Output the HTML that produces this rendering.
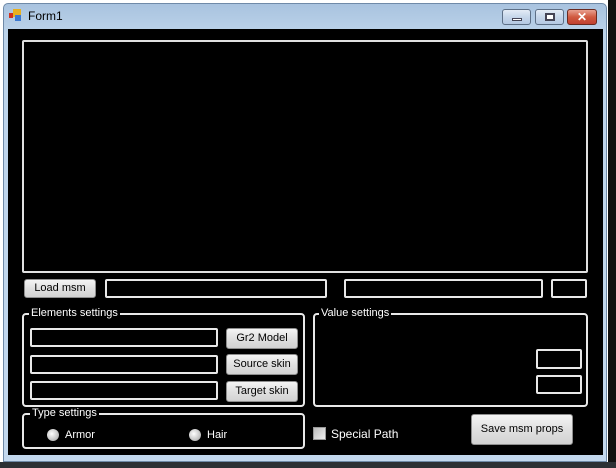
<!DOCTYPE html>
<html><head><style>
*{margin:0;padding:0;box-sizing:border-box}
body{width:616px;height:468px;background:#fff;position:relative;overflow:hidden;font-family:"Liberation Sans",sans-serif;font-size:11px}
.a{position:absolute}
.win{left:3px;top:3px;width:604px;height:459px;background:linear-gradient(#a9c3df,#bcd3ea 30px,#c3d8ee);border:1px solid #6f8aa8;border-radius:5px 5px 0 0}
.client{left:8px;top:29px;width:595px;height:426px;background:#000}
.tb{border:2px solid #e8e8e8;border-radius:2px;background:#000}
.btn{background:linear-gradient(#f4f4f4,#e0e0e0 50%,#d2d2d2);border:1px solid #8e8e8e;border-radius:3px;color:#000;text-align:center;font-size:11px}
.grp{border:2px solid #e8e8e8;border-radius:4px}
.lbl{color:#fff;background:#000;padding:0 2px;font-size:11px}
.radio{width:12px;height:12px;border-radius:50%;background:radial-gradient(circle at 40% 40%,#fff,#bbb 70%,#888);}
.wb{border:1px solid #5d6f86;border-radius:3px;background:linear-gradient(#e4ecf6,#c6d6ea 50%,#b4c8e2)}
</style></head><body>
<div class="a" style="left:0;top:462px;width:616px;height:6px;background:#2c3034"></div>
<div class="a" style="left:608px;top:0;width:8px;height:462px;background:#111"></div>
<div class="a win"></div>
<div class="a" style="left:13px;top:9px;width:8px;height:8px;background:#e8b020"></div>
<div class="a" style="left:15px;top:15px;width:6px;height:6px;background:#3b78d0"></div>
<div class="a" style="left:9px;top:13px;width:4px;height:5px;background:#d03020"></div>
<div class="a" style="left:28px;top:9px;font-size:12px;color:#000">Form1</div>
<div class="a wb" style="left:502px;top:9px;width:29px;height:16px"><div class="a" style="left:9px;top:8px;width:10px;height:3px;background:#fff;border:1px solid #445"></div></div>
<div class="a wb" style="left:535px;top:9px;width:29px;height:16px"><div class="a" style="left:9px;top:3px;width:10px;height:8px;border:2px solid #445;background:#fff"></div></div>
<div class="a" style="left:567px;top:9px;width:30px;height:16px;border:1px solid #6a2a20;border-radius:3px;background:linear-gradient(#e8a090,#d05a40 50%,#c04030);color:#fff;font-weight:bold;text-align:center;font-size:12px;line-height:14px">✕</div>
<div class="a client"></div>
<div class="a tb" style="left:22px;top:40px;width:566px;height:233px;border-color:#e0e0e0"></div>
<div class="a btn" style="left:24px;top:279px;width:72px;height:19px;line-height:17px">Load msm</div>
<div class="a tb" style="left:105px;top:279px;width:222px;height:19px"></div>
<div class="a tb" style="left:344px;top:279px;width:199px;height:19px"></div>
<div class="a tb" style="left:551px;top:279px;width:36px;height:19px"></div>
<div class="a grp" style="left:22px;top:313px;width:283px;height:94px"></div>
<div class="a lbl" style="left:29px;top:307px">Elements settings</div>
<div class="a tb" style="left:30px;top:328px;width:188px;height:19px"></div>
<div class="a tb" style="left:30px;top:355px;width:188px;height:19px"></div>
<div class="a tb" style="left:30px;top:381px;width:188px;height:19px"></div>
<div class="a btn" style="left:226px;top:328px;width:72px;height:21px;line-height:19px">Gr2 Model</div>
<div class="a btn" style="left:226px;top:354px;width:72px;height:21px;line-height:19px">Source skin</div>
<div class="a btn" style="left:226px;top:381px;width:72px;height:21px;line-height:19px">Target skin</div>
<div class="a grp" style="left:22px;top:413px;width:283px;height:36px"></div>
<div class="a lbl" style="left:30px;top:407px">Type settings</div>
<div class="a radio" style="left:47px;top:429px"></div>
<div class="a" style="left:65px;top:429px;color:#fff;font-size:11px">Armor</div>
<div class="a radio" style="left:189px;top:429px"></div>
<div class="a" style="left:207px;top:429px;color:#fff;font-size:11px">Hair</div>
<div class="a grp" style="left:313px;top:313px;width:275px;height:94px"></div>
<div class="a lbl" style="left:319px;top:307px">Value settings</div>
<div class="a tb" style="left:536px;top:349px;width:46px;height:20px"></div>
<div class="a tb" style="left:536px;top:375px;width:46px;height:19px"></div>
<div class="a" style="left:313px;top:427px;width:13px;height:13px;border:1px solid #999;background:linear-gradient(135deg,#bbb,#eee)"></div>
<div class="a" style="left:331px;top:427px;color:#fff;font-size:12px">Special Path</div>
<div class="a btn" style="left:471px;top:414px;width:102px;height:31px;line-height:29px">Save msm props</div>
</body></html>
